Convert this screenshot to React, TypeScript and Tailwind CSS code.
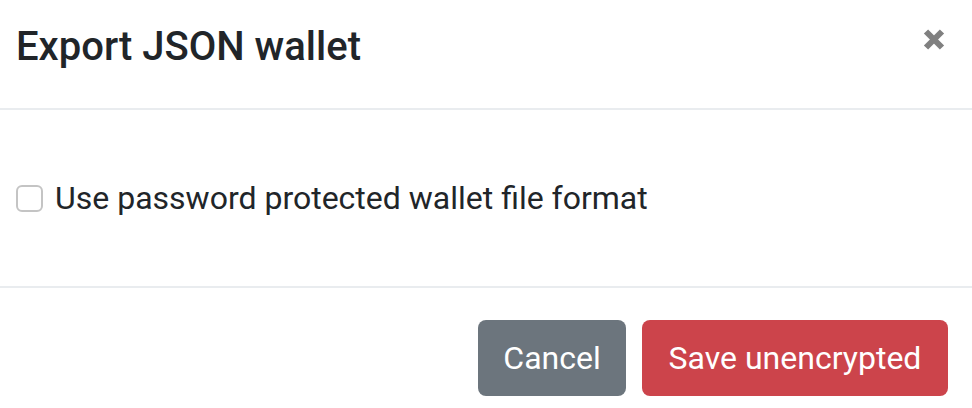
import React from 'react';

const App: React.FC = () => {
  return (
    <div className="w-[972px] h-[408px] bg-white overflow-hidden font-['Roboto',sans-serif] text-[#212529]">
      <div className="h-[110px] flex items-start justify-between pl-4 pr-[27px] pt-[23px] border-b-2 border-[#e9ecef]">
        <h5 className="text-[40px] leading-[1.2] font-medium">Export JSON wallet</h5>
        <button className="mt-[5px] w-[22px] h-[23px] flex items-center justify-center" aria-label="Close">
          <svg width="22" height="23" viewBox="0 0 22 23">
            <path d="M3 3.5 L19 19.5 M19 3.5 L3 19.5" stroke="#808080" strokeWidth="6" strokeLinecap="butt" />
          </svg>
        </button>
      </div>

      <div className="h-[176px] flex items-center px-4">
        <label className="flex items-center gap-[12px]">
          <span className="w-[27px] h-[27px] rounded-[6px] border-2 border-[#c4c4c4] bg-white" />
          <span className="text-[32px] leading-[1.5]">Use password protected wallet file format</span>
        </label>
      </div>

      <div className="border-t-2 border-[#e9ecef] pt-[32px] pr-[24px] flex justify-end gap-4">
        <button className="w-[148px] h-[76px] rounded-[8px] bg-[#6c757d] text-white text-[32px]">Cancel</button>
        <button className="w-[306px] h-[76px] rounded-[8px] bg-[#cc444b] text-white text-[32px]">Save unencrypted</button>
      </div>
    </div>
  );
};

export default App;
